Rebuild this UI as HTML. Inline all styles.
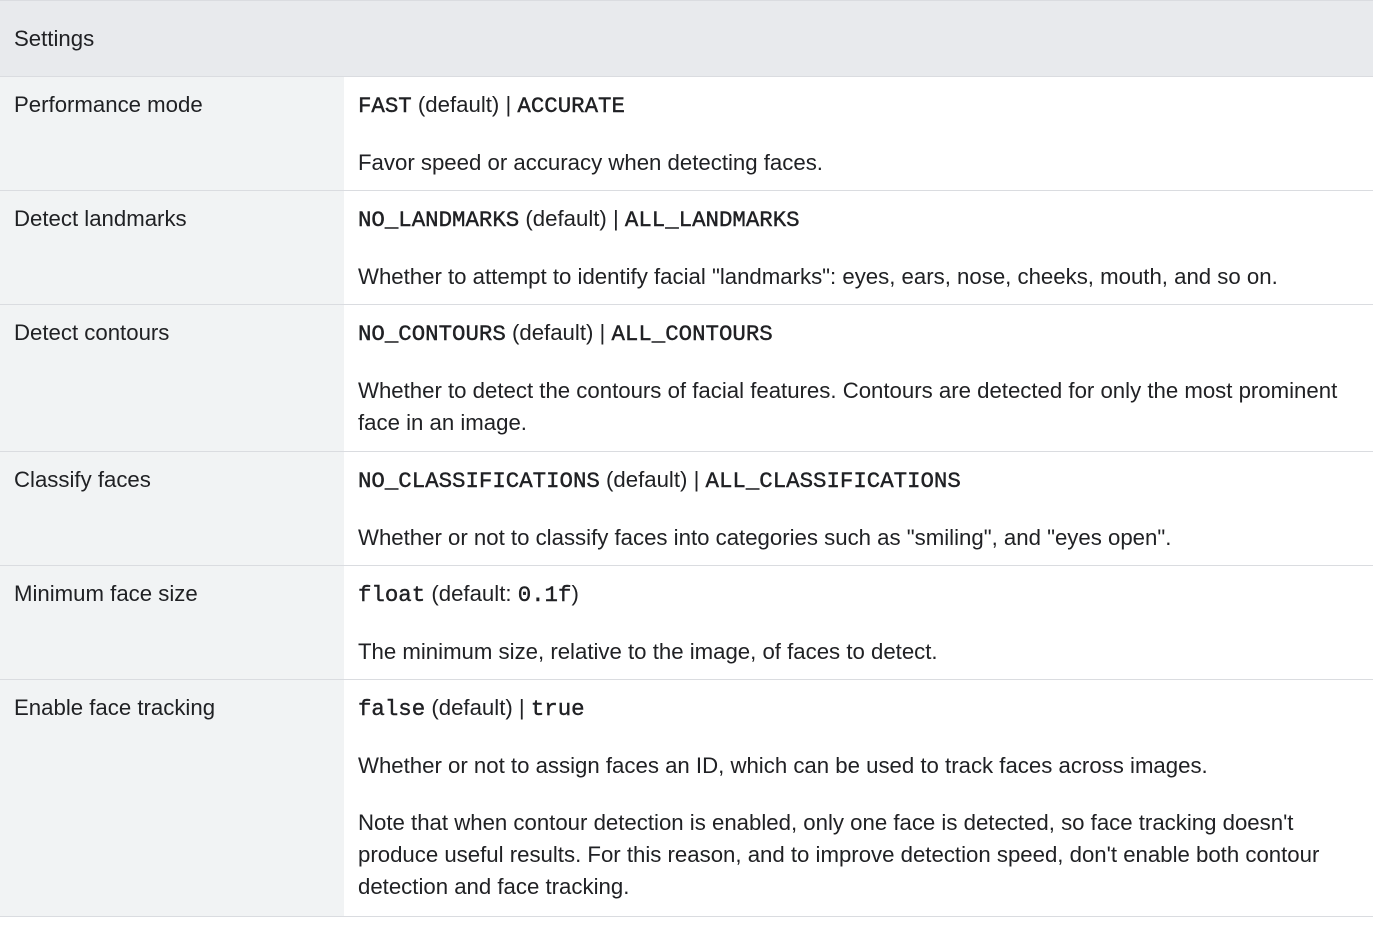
<!DOCTYPE html>
<html><head><meta charset="utf-8"><style>
html,body{margin:0;padding:0;background:#fff;width:1400px;height:931px;overflow:hidden}
table{border-collapse:collapse;width:1373px;font-family:"Liberation Sans",Arial,sans-serif;font-size:22.2px;color:#202124;line-height:32px}
th{background:#e8eaed;text-align:left;font-weight:normal;height:76px;padding:0 14px;border-top:1px solid #dadce0;border-bottom:1px solid #dadce0;box-sizing:border-box}
td{vertical-align:top;padding:12px 14px 11px;border-bottom:1px solid #dadce0}
td.k{background:#f1f3f4;width:316px}
td p{margin:0 0 25px}
td p:last-child{margin:0}
code{font-family:"Liberation Mono",monospace;font-size:22.4px;color:#202124;font-weight:normal;-webkit-text-stroke:0.4px #202124}
</style></head><body>
<table>
<tr><th colspan="2">Settings</th></tr>
<tr><td class="k">Performance mode</td><td><p><code>FAST</code> (default) | <code>ACCURATE</code></p><p>Favor speed or accuracy when detecting faces.</p></td></tr>
<tr><td class="k">Detect landmarks</td><td><p><code>NO_LANDMARKS</code> (default) | <code>ALL_LANDMARKS</code></p><p>Whether to attempt to identify facial "landmarks": eyes, ears, nose, cheeks, mouth, and so on.</p></td></tr>
<tr><td class="k" style="padding-bottom:12px">Detect contours</td><td style="padding-bottom:12px"><p><code>NO_CONTOURS</code> (default) | <code>ALL_CONTOURS</code></p><p>Whether to detect the contours of facial features. Contours are detected for only the most prominent<br>face in an image.</p></td></tr>
<tr><td class="k">Classify faces</td><td><p><code>NO_CLASSIFICATIONS</code> (default) | <code>ALL_CLASSIFICATIONS</code></p><p>Whether or not to classify faces into categories such as "smiling", and "eyes open".</p></td></tr>
<tr><td class="k">Minimum face size</td><td><p><code>float</code> (default: <code>0.1f</code>)</p><p>The minimum size, relative to the image, of faces to detect.</p></td></tr>
<tr><td class="k" style="padding-bottom:13px">Enable face tracking</td><td style="padding-bottom:13px"><p><code>false</code> (default) | <code>true</code></p><p>Whether or not to assign faces an ID, which can be used to track faces across images.</p><p>Note that when contour detection is enabled, only one face is detected, so face tracking doesn't<br>produce useful results. For this reason, and to improve detection speed, don't enable both contour<br>detection and face tracking.</p></td></tr>
</table>
</body></html>
